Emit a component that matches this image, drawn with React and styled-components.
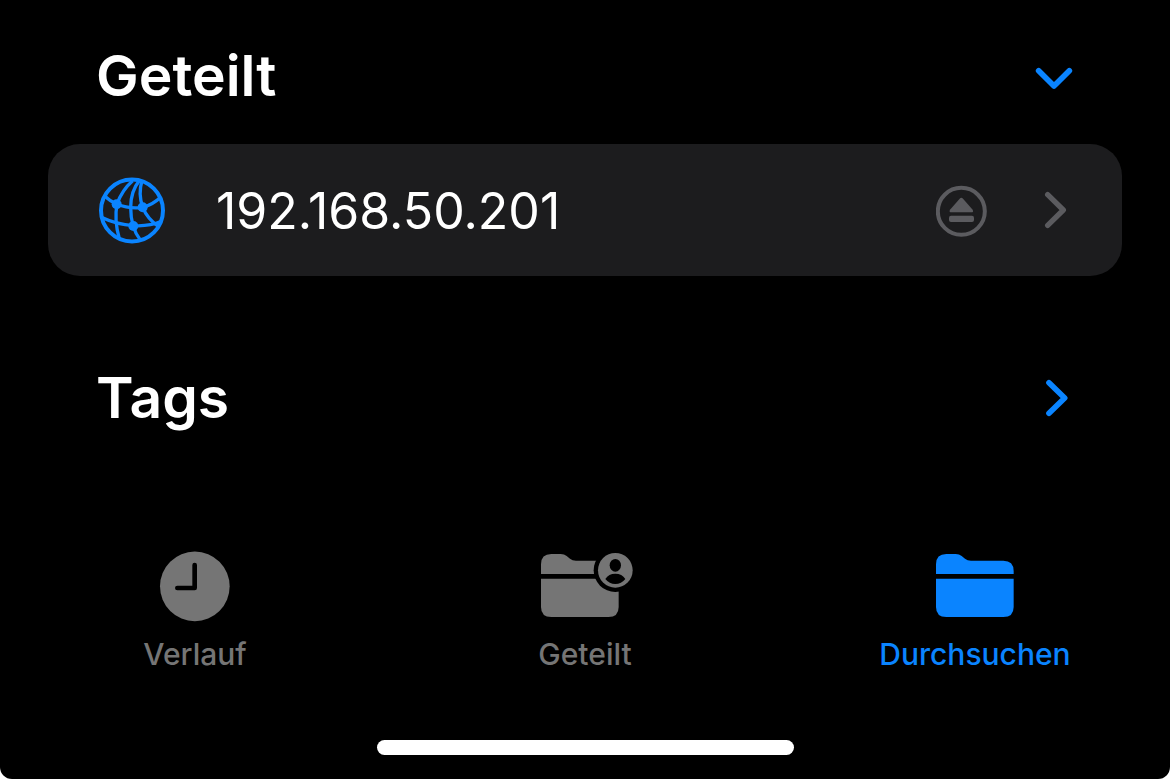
import React, { useState } from 'react';
import styled, { createGlobalStyle } from 'styled-components';

const BLUE = '#0a84ff';
const GRAY = '#757575';

const GlobeIcon = () => (
  <svg width="68" height="68" viewBox="24 27 204 204" fill="none" stroke={BLUE} strokeWidth="10" aria-hidden="true">
    <circle cx="126" cy="127.5" r="93" strokeWidth="12" />
    <path d="M128 38Q96 66 81 108Q72 158 88 212" />
    <path d="M148 38Q122 70 122 118Q122 180 151 216" />
    <path d="M156 38Q144 76 158 118Q172 152 206 176" />
    <path d="M42 82Q60 100 81 108Q118 124 158 118Q186 112 212 88" />
    <path d="M34 148Q80 170 130 173Q178 176 214 160" />
    <g fill={BLUE} stroke="none">
      <circle cx="80" cy="109" r="15" />
      <circle cx="158" cy="118" r="15" />
      <circle cx="130" cy="174" r="15" />
    </g>
  </svg>
);

const EjectIcon = () => (
  <svg width="52" height="52" viewBox="48 45 156 156" aria-hidden="true">
    <circle cx="124" cy="124" r="70.5" fill="none" stroke="currentColor" strokeWidth="12" />
    <path
      d="M119 86Q124 81 129 86L158 119Q162 127 154 127H94Q86 127 90 119Z"
      fill="currentColor"
    />
    <rect x="87" y="137" width="75" height="19" rx="6" fill="currentColor" />
  </svg>
);

const RowChevron = () => (
  <svg width="24" height="40" viewBox="372 63 72 120" fill="none" stroke="currentColor" aria-hidden="true">
    <path d="M383 74L430 120L383 166" strokeWidth="16" strokeLinecap="round" strokeLinejoin="round" />
  </svg>
);

const SectionChevron = ({ open }) => (
  <svg width="40" height="40" viewBox="0 0 120 120" fill="none" stroke="currentColor" aria-hidden="true">
    <path
      d={open ? 'M14 44L60 90L106 44' : 'M45 14L92 60L45 106'}
      strokeWidth="17"
      strokeLinecap="round"
      strokeLinejoin="round"
    />
  </svg>
);

const ClockIcon = () => (
  <svg width="72" height="72" viewBox="27 29 216 216" aria-hidden="true">
    <circle cx="134.5" cy="138" r="104.5" fill="currentColor" />
    <path d="M134 74V143H82" fill="none" stroke="#000" strokeWidth="14" strokeLinecap="round" strokeLinejoin="round" />
  </svg>
);

const FolderShape = () => (
  <g fill="currentColor">
    <path d="M33 102V73Q33 42 64 42H92Q103 42 110 48L120 56Q127 62 138 62H235Q266 62 266 93V102Z" />
    <path d="M33 116H266V201Q266 231 235 231H64Q33 231 33 201Z" />
  </g>
);

const FolderIcon = () => (
  <svg width="78" height="72" viewBox="33 30 234 216" aria-hidden="true">
    <FolderShape />
  </svg>
);

const SharedFolderIcon = () => (
  <svg width="98" height="72" viewBox="18 30 294 216" aria-hidden="true">
    <FolderShape />
    <circle cx="256" cy="91" r="65" fill="#000" />
    <circle cx="256" cy="91" r="52" fill="currentColor" />
    <ellipse cx="256" cy="76" rx="17" ry="19" fill="#000" />
    <path d="M226 117Q236 101 256 101Q276 101 286 117Q274 132 256 132Q238 132 226 117Z" fill="#000" />
  </svg>
);

const tabs = [
  { id: 'recent', label: 'Verlauf', icon: <ClockIcon /> },
  { id: 'shared', label: 'Geteilt', icon: <SharedFolderIcon /> },
  { id: 'browse', label: 'Durchsuchen', icon: <FolderIcon /> }
];

const App = () => {
  const [isSharedOpen, setIsSharedOpen] = useState(true);
  const [isTagsOpen, setIsTagsOpen] = useState(false);
  const [activeTab, setActiveTab] = useState('browse');

  return (
    <>
      <GlobalStyle />
      <StScreen>
        <StMain>
          <section>
            <StSectionHeader>
              <StSectionTitle>Geteilt</StSectionTitle>
              <StToggleBtn
                aria-label="Geteilt"
                aria-expanded={isSharedOpen}
                onClick={() => setIsSharedOpen(!isSharedOpen)}
              >
                <SectionChevron open={isSharedOpen} />
              </StToggleBtn>
            </StSectionHeader>
            {isSharedOpen && (
              <StServerRow>
                <StServerLink href="#server">
                  <GlobeIcon />
                  <span>192.168.50.201</span>
                </StServerLink>
                <StRowBtn aria-label="Auswerfen">
                  <EjectIcon />
                </StRowBtn>
                <StRowBtn aria-label="Öffnen">
                  <RowChevron />
                </StRowBtn>
              </StServerRow>
            )}
          </section>
          <section>
            <StSectionHeader>
              <StSectionTitle>Tags</StSectionTitle>
              <StToggleBtn aria-label="Tags" aria-expanded={isTagsOpen} onClick={() => setIsTagsOpen(!isTagsOpen)}>
                <SectionChevron open={isTagsOpen} />
              </StToggleBtn>
            </StSectionHeader>
          </section>
        </StMain>
        <StTabBar>
          {tabs.map((tab) => (
            <StTabBtn key={tab.id} $active={tab.id === activeTab} onClick={() => setActiveTab(tab.id)}>
              {tab.icon}
              <span>{tab.label}</span>
            </StTabBtn>
          ))}
        </StTabBar>
        <StHomeIndicator />
      </StScreen>
    </>
  );
};

export default App;

const GlobalStyle = createGlobalStyle`
  * {
    box-sizing: border-box;
  }
  body {
    margin: 0;
    background: #fff;
    font-family: Inter, 'Liberation Sans', sans-serif;
  }
  button {
    padding: 0;
    border: none;
    background: none;
    font: inherit;
    cursor: pointer;
  }
  svg {
    display: block;
    flex-shrink: 0;
  }
`;

const StScreen = styled.div`
  display: flex;
  flex-direction: column;
  min-height: 100vh;
  padding-bottom: 24px;
  background: #000;
  color: #fff;
  border-radius: 0 0 12px 12px;
`;

const StMain = styled.main`
  display: flex;
  flex-direction: column;
  gap: 46px;
  padding: 0 48px;
`;

const StSectionHeader = styled.header`
  display: flex;
  align-items: center;
  justify-content: space-between;
  padding: 40px 48px 32px;
`;

const StSectionTitle = styled.h2`
  margin: 0;
  font-size: 57px;
  font-weight: 600;
  line-height: 72px;
`;

const StToggleBtn = styled.button`
  color: ${BLUE};
`;

const StServerRow = styled.div`
  display: flex;
  align-items: center;
  gap: 56px;
  padding: 33px 54px 31px 50px;
  border-radius: 32px;
  background: #1c1c1e;
`;

const StServerLink = styled.a`
  display: flex;
  flex: 1;
  align-items: center;
  gap: 50px;
  color: #fff;
  font-size: 50px;
  line-height: 68px;
  text-decoration: none;
`;

const StRowBtn = styled.button`
  color: #5b5b5f;
`;

const StTabBar = styled.nav`
  display: grid;
  grid-template-columns: repeat(3, 1fr);
  margin-top: auto;
`;

const StTabBtn = styled.button`
  display: flex;
  flex-direction: column;
  align-items: center;
  gap: 14px;
  color: ${({ $active }) => ($active ? BLUE : GRAY)};

  span {
    font-size: 30px;
    font-weight: 500;
    line-height: 36px;
  }
`;

const StHomeIndicator = styled.div`
  width: 417px;
  height: 15px;
  margin: 68px auto 0;
  border-radius: 8px;
  background: #fff;
`;
